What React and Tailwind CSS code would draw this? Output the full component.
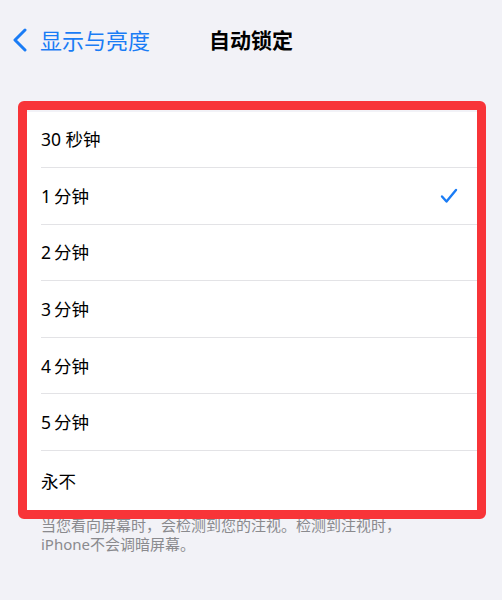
import React from "react";

const items = [
  ["30", " 秒钟"],
  ["1", "分钟"],
  ["2", "分钟"],
  ["3", "分钟"],
  ["4", "分钟"],
  ["5", "分钟"],
  ["", "永不"],
];

export default function App() {
  return (
    <div
      className="relative w-[502px] h-[600px] bg-[#f2f2f7] overflow-hidden"
      style={{ fontFamily: '"Noto Sans", "Noto Sans CJK SC", sans-serif' }}
    >
      {/* nav bar */}
      <div className="grid grid-cols-[1fr_auto_1fr] items-center h-[80px]">
        <div className="flex items-center pl-[12px]">
          <svg width="16" height="24" viewBox="0 0 16 24" className="mr-[12px]">
            <polyline
              points="13,2 3,12 13,22"
              fill="none"
              stroke="#1a7cf5"
              strokeWidth="3"
              strokeLinecap="round"
              strokeLinejoin="round"
            />
          </svg>
          <span className="text-[22px] leading-none text-[#1a7cf5]">显示与亮度</span>
        </div>
        <div className="text-[21px] leading-none font-bold text-black">自动锁定</div>
        <div />
      </div>

      {/* card */}
      <div className="mt-[31.5px] mx-[22px] bg-white">
        {items.map(([num, rest], i) => (
          <div
            key={i}
            className={
              i === items.length - 1
                ? "flex items-center h-[60px] pl-[19px]"
                : "flex items-center h-[56.6px] pl-[19px]"
            }
          >
            <div
              className={
                i === items.length - 1
                  ? "flex-1 h-full flex items-center justify-between pr-[24px]"
                  : "flex-1 h-full flex items-center justify-between pr-[22px] border-b border-[#e3e3e6]"
              }
            >
              <span className="text-[17.5px] text-black">
                {num && <span className={i === 0 ? "" : "mr-[3px]"}>{num}</span>}
                {rest}
              </span>
              {i === 1 && (
                <svg width="18" height="16" viewBox="0 0 18 16">
                  <polyline
                    points="2,8.5 6.5,13.5 16,2"
                    fill="none"
                    stroke="#1a7cf5"
                    strokeWidth="2.4"
                    strokeLinecap="round"
                    strokeLinejoin="round"
                  />
                </svg>
              )}
            </div>
          </div>
        ))}
      </div>

      {/* footer */}
      <div className="mt-[5px] pl-[41px] pr-[40px] text-[15px] text-[#8a8a8e]">
        <div className="leading-[19px]">当您看向屏幕时，会检测到您的注视。检测到注视时，</div>
        <div className="leading-[19px]">iPhone不会调暗屏幕。</div>
      </div>

      {/* red highlight overlay */}
      <div className="absolute left-[18px] top-[101px] w-[468px] h-[418px] border-[9px] border-[#f83438] rounded-[6px] pointer-events-none" />
    </div>
  );
}
